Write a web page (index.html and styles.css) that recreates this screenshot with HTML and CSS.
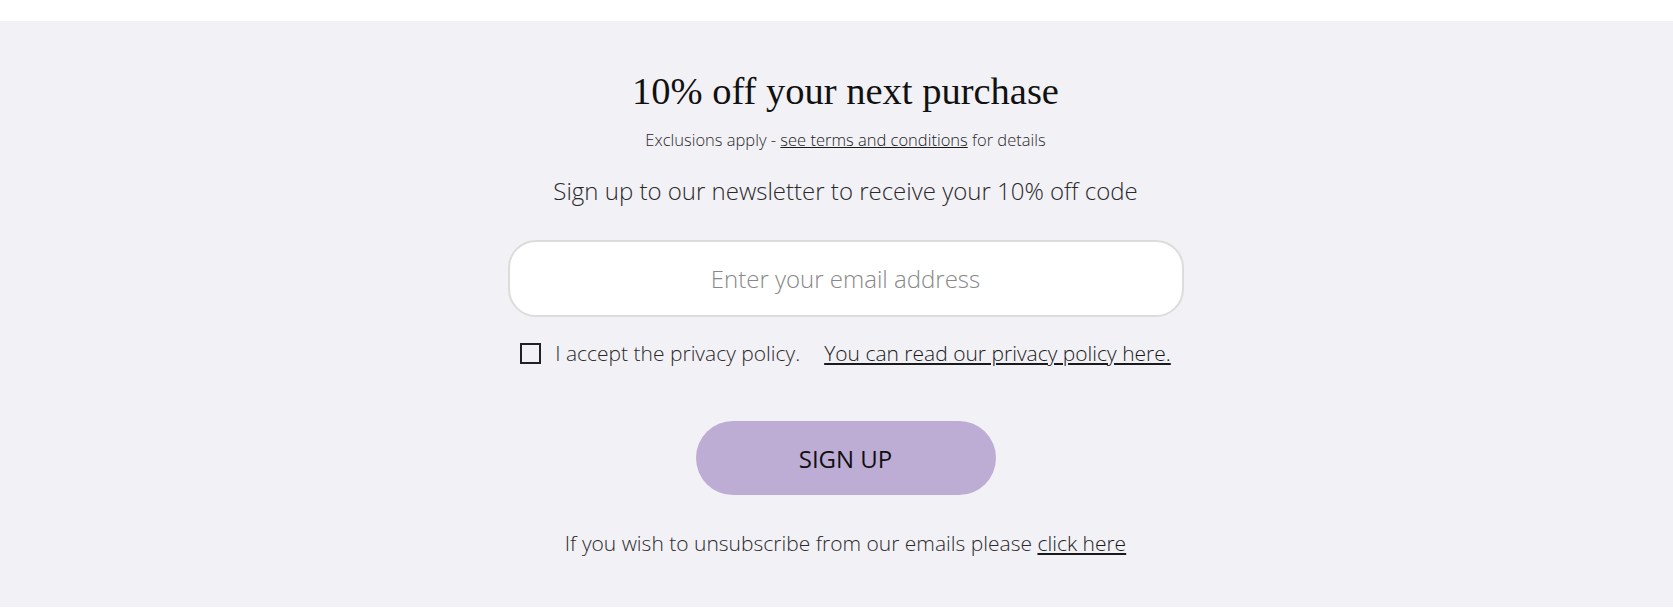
FILE: index.html
```html
<!DOCTYPE html>
<html lang="en">
<head>
<meta charset="UTF-8">
<meta name="viewport" content="width=device-width, initial-scale=1.0">
<title>Newsletter</title>
<link rel="stylesheet" href="styles.css">
</head>
<body>

<div class="topbar"></div>

<section class="signup">
    <h1>10% off your next purchase</h1>
    <p class="terms">Exclusions apply - <a href="#">see terms and conditions</a> for details</p>
    <p class="lead">Sign up to our newsletter to receive your 10% off code</p>

    <form class="signup-form">
        <input type="email" class="email" placeholder="Enter your email address">
        <label class="consent">
            <input type="checkbox" class="check">
            <span>I accept the privacy policy.</span>
            <a href="#">You can read our privacy policy here.</a>
        </label>
        <button type="submit" class="btn">SIGN UP</button>
    </form>

    <p class="unsub">If you wish to unsubscribe from our emails please <a href="#">click here</a></p>
</section>

</body>
</html>
```

FILE: styles.css
```css
body {
    margin: 0;
    font-family: "Open Sans", Arial, sans-serif;
    color: #2a2a2a;
}
a {
    color: #1a1a1a;
    text-decoration: underline;
}
.topbar {
    height: 21px;
    background: #fff;
}
.signup {
    background: #f2f1f6;
    padding: 50px 0 48px 18px;
    display: flex;
    flex-direction: column;
    align-items: center;
    text-align: center;
}
h1 {
    margin: 0;
    font-family: Georgia, "Liberation Serif", serif;
    font-weight: normal;
    font-size: 38.5px;
    line-height: 40px;
    color: #111;
}
.terms {
    margin: 18px 0 0;
    font-size: 16.5px;
    font-weight: 300;
    line-height: 22px;
}
.lead {
    margin: 24px 0 0;
    font-size: 24px;
    font-weight: 300;
    line-height: 32px;
}
.signup-form {
    display: flex;
    flex-direction: column;
    align-items: center;
}
.email {
    margin-top: 33px;
    box-sizing: border-box;
    width: 676px;
    height: 77px;
    border: 2px solid #dcdcdc;
    border-radius: 28px;
    background: #fff;
    font-family: inherit;
    font-size: 24px;
    font-weight: 300;
    text-align: center;
    color: #333;
    outline: none;
}
.email::placeholder {
    color: #888;
}
.consent {
    margin-top: 22px;
    display: flex;
    align-items: center;
    font-size: 21px;
    font-weight: 300;
    line-height: 28px;
}
.check {
    appearance: none;
    margin: 0 14px 0 0;
    width: 21px;
    height: 21px;
    border: 2px solid #222;
    background: transparent;
}
.consent a {
    margin-left: 24px;
}
.btn {
    margin-top: 54px;
    width: 300px;
    height: 74px;
    border: none;
    border-radius: 37px;
    background: #bdadd4;
    font-family: inherit;
    font-size: 24px;
    color: #111;
    cursor: pointer;
}
.unsub {
    margin: 32px 0 0;
    font-size: 21px;
    font-weight: 300;
    line-height: 32px;
}
```
